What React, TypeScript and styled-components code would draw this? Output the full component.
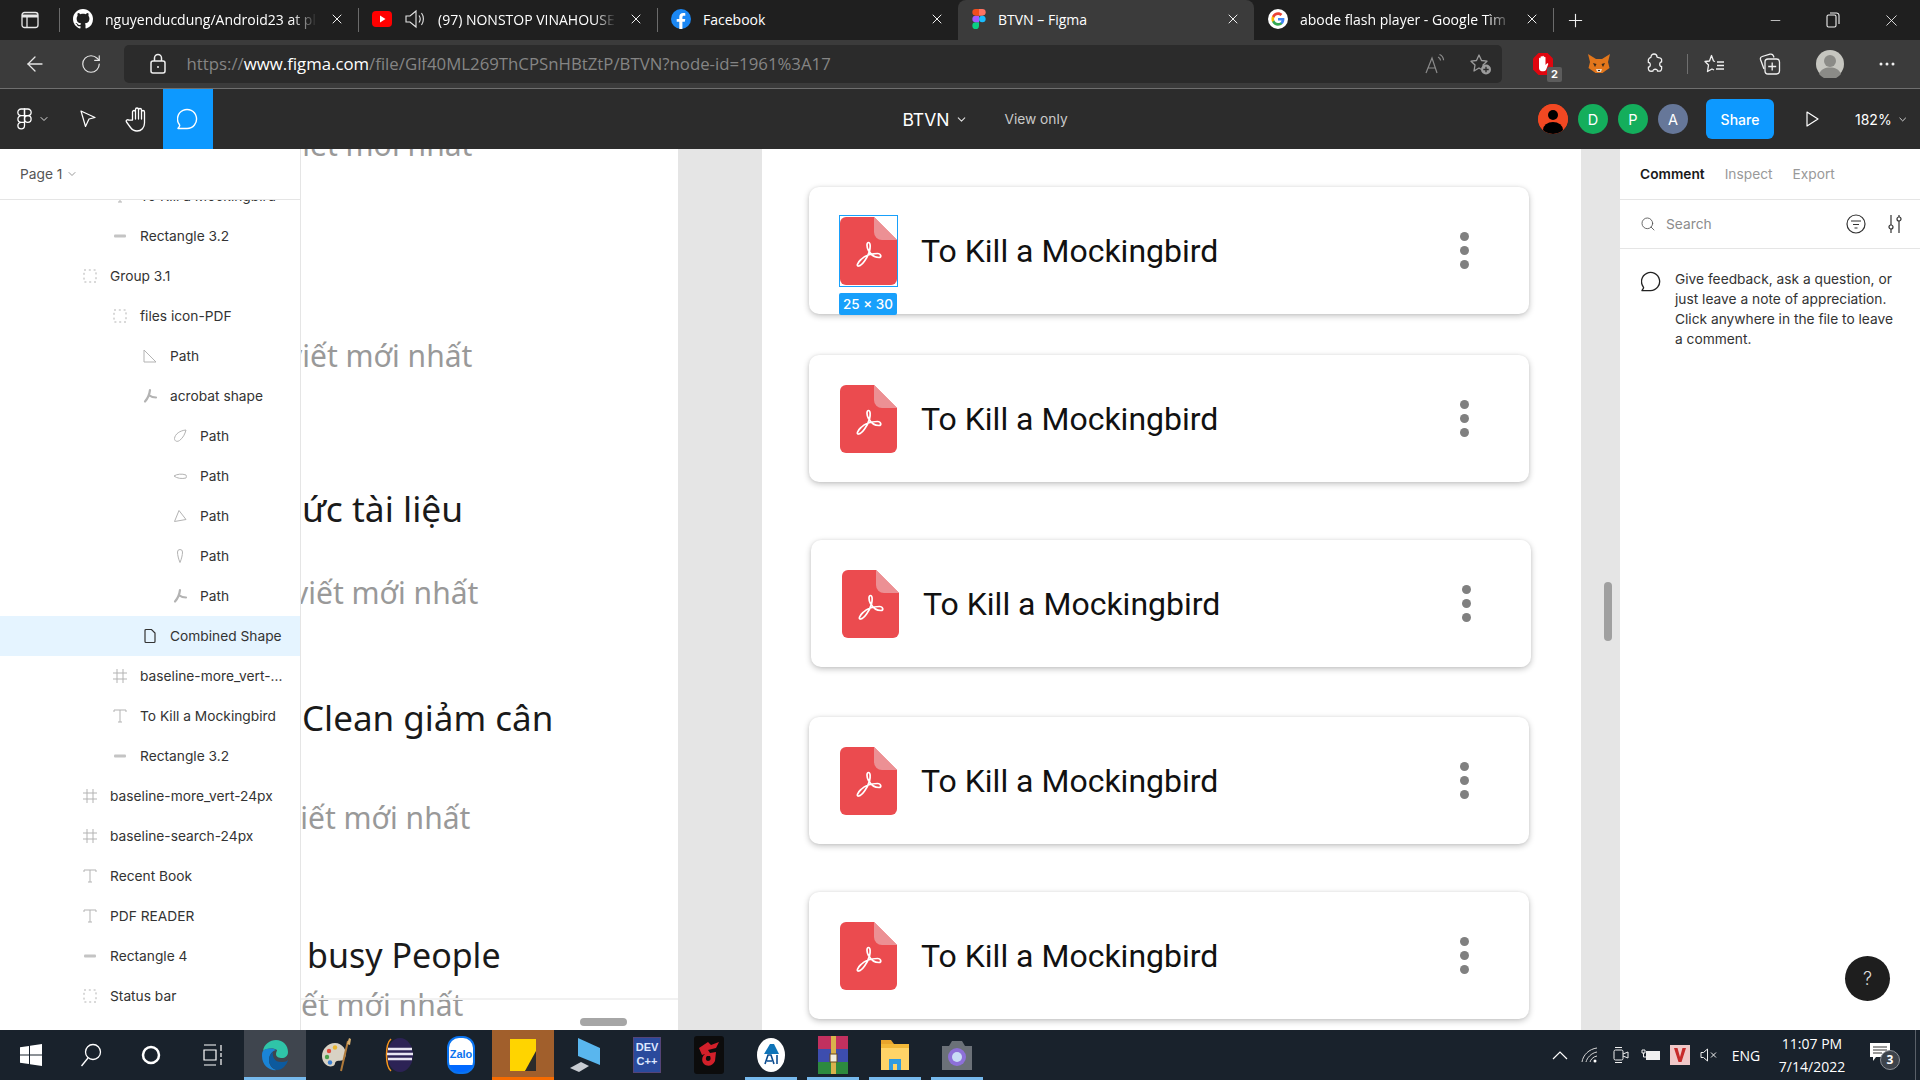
import React from "react";
import styled, { createGlobalStyle } from "styled-components";
import { ArrowLeft, ChevronDown, Minus, Plus, RotateCw, Search, X } from "lucide-react";

const GlobalStyle = createGlobalStyle`
  html, body {
    margin: 0;
    padding: 0;
    overflow: hidden;
    background: #fff;
  }
  * {
    box-sizing: border-box;
  }
`;

const Page = styled.div`
  width: 1920px;
  height: 1080px;
  display: flex;
  flex-direction: column;
  overflow: hidden;
  font-family: Inter, "Liberation Sans", sans-serif;
`;

/* browser chrome */
const TabStrip = styled.div`
  height: 40px;
  display: flex;
  align-items: center;
  background: #1f1f1f;
  color: #fff;
  font-family: "Open Sans", "Liberation Sans", sans-serif;
  font-size: 14px;
`;

const SideToggle = styled.div`
  width: 59px;
  height: 100%;
  display: flex;
  align-items: center;
  justify-content: center;
`;

const Tab = styled.div<{ $active?: boolean; $noSep?: boolean; $width: number }>`
  width: ${(p) => p.$width}px;
  height: 100%;
  display: flex;
  align-items: center;
  padding: 0 13px 2px 14px;
  gap: 12px;
  position: relative;
  background: ${(p) => (p.$active ? "#3b3b3b" : "transparent")};
  border-radius: ${(p) => (p.$active ? "8px 8px 0 0" : "0")};
  &::before {
    content: "";
    display: ${(p) => (p.$noSep ? "none" : "block")};
    position: absolute;
    left: 0;
    top: 8px;
    bottom: 8px;
    width: 1px;
    background: #6b6b6b;
  }
`;

const TabTitle = styled.span<{ $fade?: boolean }>`
  flex: 1;
  min-width: 0;
  white-space: nowrap;
  -webkit-mask-image: ${(p) => (p.$fade ? "linear-gradient(to right, #000 88%, transparent 100%)" : "none")};
  mask-image: ${(p) => (p.$fade ? "linear-gradient(to right, #000 88%, transparent 100%)" : "none")};
  font-size: 14px;
`;

const TabPlus = styled.div`
  width: 44px;
  height: 100%;
  display: flex;
  align-items: center;
  justify-content: center;
  position: relative;
  &::before {
    content: "";
    position: absolute;
    left: 0;
    top: 8px;
    bottom: 8px;
    width: 1px;
    background: #6b6b6b;
  }
`;

const WindowButtons = styled.div`
  margin-left: auto;
  display: flex;
  align-items: center;
`;

const WindowButton = styled.div`
  width: 58px;
  height: 40px;
  display: flex;
  align-items: center;
  justify-content: center;
`;

const BrowserBar = styled.div`
  height: 49px;
  display: flex;
  align-items: center;
  background: #3b3b3b;
  border-bottom: 1px solid #6f6f6f;
  padding-bottom: 1px;
`;

const NavButton = styled.div`
  width: 45px;
  display: flex;
  justify-content: center;
  align-items: center;
  color: #e6e6e6;
`;

const NavGroup = styled.div`
  display: flex;
  width: 125px;
  padding-left: 12px;
  gap: 11px;
`;

const AddressBar = styled.div`
  width: 1384px;
  height: 38px;
  background: #2b2b2b;
  border-radius: 5px;
  display: flex;
  align-items: center;
  padding: 0 0 0 26px;
  gap: 20px;
  font-family: "Open Sans", "Liberation Sans", sans-serif;
  font-size: 16.8px;
  color: #858585;
  white-space: nowrap;
`;

const UrlHost = styled.span`
  color: #fff;
`;

const AddressEnd = styled.div`
  margin-left: auto;
  display: flex;
  align-items: center;
  gap: 24px;
  padding-right: 10px;
`;

const Extensions = styled.div`
  flex: 1;
  display: flex;
  align-items: center;
  padding-left: 27px;
`;

const ExtButton = styled.div<{ $width: number }>`
  width: ${(p) => p.$width}px;
  display: flex;
  justify-content: center;
  align-items: center;
  position: relative;
`;

const ExtBadge = styled.span`
  position: absolute;
  right: -5px;
  bottom: -6px;
  width: 15px;
  height: 15px;
  background: #5c5c5c;
  border-radius: 2px;
  color: #fff;
  font: 700 11px/15px Inter, sans-serif;
  text-align: center;
`;

const ExtDivider = styled.div`
  width: 1px;
  height: 20px;
  background: #6f6f6f;
  margin: 0 8px 0 0;
`;

/* figma toolbar */
const FigmaBar = styled.div`
  height: 60px;
  background: #2c2c2c;
  display: grid;
  grid-template-columns: 1fr auto 1fr;
  align-items: center;
  color: #fff;
`;

const ToolGroup = styled.div`
  display: flex;
  align-items: stretch;
  height: 60px;
`;

const ToolButton = styled.div<{ $width: number; $active?: boolean }>`
  width: ${(p) => p.$width}px;
  display: flex;
  align-items: center;
  justify-content: center;
  background: ${(p) => (p.$active ? "#0d99ff" : "transparent")};
  gap: 6px;
`;

const FileTitle = styled.div`
  display: flex;
  align-items: center;
  font-size: 17.5px;
  font-weight: 400;
  margin-left: 50px;
`;

const TitleCaret = styled.span`
  display: flex;
  margin-left: 6px;
`;

const ViewOnly = styled.span`
  color: #c9c9c9;
  font-size: 13.75px;
  font-weight: 400;
  margin-left: 36px;
`;

const FigmaRight = styled.div`
  display: flex;
  align-items: center;
  justify-content: flex-end;
`;

const Avatar = styled.div<{ $bg: string }>`
  width: 30px;
  height: 30px;
  border-radius: 50%;
  margin-right: 10px;
  background: ${(p) => p.$bg};
  color: #fff;
  font-size: 14.5px;
  display: flex;
  align-items: center;
  justify-content: center;
  overflow: hidden;
`;

const ShareButton = styled.div`
  width: 68px;
  height: 40px;
  margin-left: 8px;
  background: #0d99ff;
  border-radius: 6px;
  display: flex;
  align-items: center;
  justify-content: center;
  font-size: 14px;
  font-weight: 500;
`;

const PlayWrap = styled.div`
  width: 64px;
  display: flex;
  justify-content: center;
  padding-left: 12px;
  margin-right: 17px;
`;

const Zoom = styled.div`
  display: flex;
  align-items: center;
  gap: 5px;
  font-size: 14px;
  padding-right: 12px;
  width: 65px;
`;

/* main area */
const Workspace = styled.div`
  height: 881px;
  display: flex;
  background: #fff;
`;

const LayersPanel = styled.div`
  width: 301px;
  flex: none;
  border-right: 1px solid #e5e5e5;
  display: flex;
  flex-direction: column;
  overflow: hidden;
`;

const PageHeader = styled.div`
  height: 51px;
  flex: none;
  border-bottom: 1px solid #e5e5e5;
  display: flex;
  align-items: center;
  gap: 4px;
  padding: 0 0 0 20px;
  font-size: 13.75px;
  color: #555;
  position: relative;
  z-index: 1;
  background: #fff;
`;

const LayerList = styled.div`
  margin-top: -24px;
`;

const LayerRow = styled.div<{ $level: number; $selected?: boolean }>`
  height: 40px;
  display: flex;
  align-items: center;
  gap: 12px;
  padding-left: ${(p) => 52 + p.$level * 30}px;
  background: ${(p) => (p.$selected ? "#e5f4ff" : "transparent")};
  font-size: 13.75px;
  color: #333;
  white-space: nowrap;
`;

const LayerGlyph = styled.svg`
  width: 16px;
  height: 16px;
  flex: none;
  overflow: visible;
`;

const TextFrame = styled.div`
  width: 377px;
  flex: none;
  position: relative;
  overflow: hidden;
  background: #fff;
  font-family: "Noto Sans", sans-serif;
  white-space: nowrap;
`;

const ArticleLine = styled.div<{ $top: number; $shift: number; $size: number; $title?: boolean }>`
  height: 40px;
  line-height: 40px;
  margin-top: ${(p) => p.$top}px;
  margin-left: ${(p) => p.$shift}px;
  font-size: ${(p) => p.$size}px;
  color: ${(p) => (p.$title ? "#1a1a1a" : "#999")};
`;

const FrameRule = styled.div`
  position: absolute;
  left: 0;
  right: 0;
  top: 849px;
  height: 2px;
  background: #f1f1f1;
`;

const HorizontalThumb = styled.div`
  position: absolute;
  left: 279px;
  top: 869px;
  width: 47px;
  height: 8px;
  border-radius: 4px;
  background: #a6a6a6;
`;

const GrayGutter = styled.div<{ $width: number }>`
  width: ${(p) => p.$width}px;
  flex: none;
  background: #e5e5e5;
  position: relative;
`;

const VerticalThumb = styled.div`
  position: absolute;
  left: 23px;
  top: 433px;
  width: 8px;
  height: 59px;
  border-radius: 4px;
  background: #a0a0a0;
`;

const CardFrame = styled.div`
  width: 819px;
  flex: none;
  background: #fff;
  overflow: hidden;
  display: flex;
  flex-direction: column;
  padding-left: 47px;
`;

const Card = styled.div<{ $top: number; $nudge?: number }>`
  width: 720px;
  height: 127px;
  flex: none;
  margin-top: ${(p) => p.$top}px;
  margin-left: ${(p) => p.$nudge ?? 0}px;
  background: #fff;
  border-radius: 10px;
  box-shadow: 0 2px 6px rgba(0, 0, 0, 0.24), 0 0 3px rgba(0, 0, 0, 0.06);
  display: flex;
  align-items: center;
  padding: 0 60px 0 31px;
  position: relative;
`;

const PdfWrap = styled.div`
  width: 57px;
  height: 68px;
  flex: none;
  position: relative;
`;

const PdfOutline = styled.div`
  position: absolute;
  inset: -2px -1px;
  border: 1.5px solid #18a0fb;
`;

const SizeBadge = styled.div`
  position: absolute;
  left: -1px;
  top: 76px;
  width: 58px;
  height: 22px;
  border-radius: 2px;
  background: #18a0fb;
  color: #fff;
  font-size: 13.5px;
  line-height: 22px;
  font-weight: 500;
  text-align: center;
  white-space: nowrap;
`;

const CardTitle = styled.div`
  margin-left: 24px;
  font-family: Roboto, sans-serif;
  font-size: 32px;
  color: #111;
  white-space: nowrap;
`;

const MoreDots = styled.div`
  margin-left: auto;
  display: flex;
  flex-direction: column;
  gap: 5px;
`;

const Dot = styled.span`
  width: 9px;
  height: 9px;
  border-radius: 50%;
  background: #808080;
`;

const RightPanel = styled.div`
  flex: 1;
  background: #fff;
  position: relative;
  display: flex;
  flex-direction: column;
  font-size: 13.75px;
`;

const PanelTabs = styled.div`
  height: 51px;
  border-bottom: 1px solid #e5e5e5;
  display: flex;
  align-items: center;
  gap: 20px;
  padding: 0 0 0 20px;
  color: #999;
`;

const PanelTabLabel = styled.span<{ $active?: boolean }>`
  color: ${(p) => (p.$active ? "#1a1a1a" : "#999")};
  font-weight: ${(p) => (p.$active ? 600 : 400)};
`;

const SearchRow = styled.div`
  height: 49px;
  border-bottom: 1px solid #e5e5e5;
  display: flex;
  align-items: center;
  padding: 0 17px 0 20px;
  color: #8c8c8c;
  gap: 10px;
`;

const SearchActions = styled.div`
  margin-left: auto;
  display: flex;
  align-items: center;
  gap: 21px;
`;

const CommentHint = styled.div`
  display: flex;
  gap: 13px;
  padding: 20px 20px 0 21px;
  color: #333;
  line-height: 20px;
`;

const HintIcon = styled.div`
  flex: none;
  padding-top: 2px;
`;

const HelpButton = styled.div`
  position: absolute;
  right: 30px;
  bottom: 29px;
  width: 45px;
  height: 45px;
  border-radius: 50%;
  background: #1e1e1e;
  color: #ddd;
  font-size: 18px;
  font-weight: 300;
  display: flex;
  align-items: center;
  justify-content: center;
`;

/* windows taskbar */
const Taskbar = styled.div`
  height: 50px;
  background: #19222c;
  display: flex;
  align-items: stretch;
  color: #fff;
  font-family: "Open Sans", "Liberation Sans", sans-serif;
`;

const StartArea = styled.div`
  display: flex;
`;

const TaskItem = styled.div<{ $width: number; $bg?: string; $bar?: string; $fullBar?: boolean }>`
  width: ${(p) => p.$width}px;
  height: 50px;
  display: flex;
  align-items: center;
  justify-content: center;
  background: ${(p) => p.$bg ?? "transparent"};
  position: relative;
  &::after {
    content: "";
    display: ${(p) => (p.$bar ? "block" : "none")};
    position: absolute;
    left: ${(p) => (p.$fullBar ? 0 : 5)}px;
    right: ${(p) => (p.$fullBar ? 0 : 5)}px;
    bottom: 0;
    height: 3px;
    background: ${(p) => p.$bar};
  }
`;

const Tray = styled.div`
  margin-left: auto;
  display: flex;
  align-items: center;
  padding-right: 10px;
  border-right: 1px solid #5a6068;
  margin-right: 4px;
  height: 100%;
`;

const TrayIcon = styled.div<{ $width: number }>`
  width: ${(p) => p.$width}px;
  display: flex;
  justify-content: center;
`;

const TrayLang = styled.div`
  width: 46px;
  text-align: center;
  font-size: 14px;
`;

const Clock = styled.div`
  width: 86px;
  text-align: center;
  font-size: 14px;
  line-height: 23px;
`;

const NotifyWrap = styled.div`
  width: 50px;
  height: 30px;
  display: flex;
  justify-content: center;
  position: relative;
`;

const NotifyCount = styled.span`
  position: absolute;
  left: 25px;
  top: 10px;
  width: 20px;
  height: 20px;
  border-radius: 50%;
  background: #3d434b;
  border: 1px solid #8c9096;
  color: #fff;
  font-size: 12px;
  font-weight: 700;
  line-height: 18px;
  text-align: center;
`;

const NotifyGlyph = styled.svg`
  margin-top: 3px;
`;

const ZaloMark = styled.div`
  width: 28px;
  height: 38px;
  border-radius: 12px;
  background: linear-gradient(#fff 78%, #0068ff 78%);
  border: 2px solid #0a73ef;
  color: #0a73ef;
  font: 700 11px/32px "Liberation Sans", sans-serif;
  text-align: center;
`;

const DevMark = styled.div`
  width: 28px;
  height: 36px;
  background: #2a4a9c;
  border: 1px solid #547;
  color: #dfe8ff;
  font: 700 11px/14px "Liberation Sans", sans-serif;
  text-align: center;
  padding-top: 2px;
`;

/* drawings */
const SidebarIcon = () => (
  <svg width="18" height="18" viewBox="0 0 18 18" fill="none" stroke="#e8e8e8" strokeWidth="1.3">
    <rect x="1" y="1.5" width="16" height="15" rx="2.5" />
    <path d="M1 5h16" strokeWidth="3" />
    <path d="M6 5v11" />
  </svg>
);

const GithubIcon = () => (
  <svg width="20" height="20" viewBox="0 0 16 16" fill="#fff">
    <path d="M8 0C3.58 0 0 3.58 0 8c0 3.54 2.29 6.53 5.47 7.59.4.07.55-.17.55-.38 0-.19-.01-.82-.01-1.49-2.01.37-2.53-.49-2.69-.94-.09-.23-.48-.94-.82-1.13-.28-.15-.68-.52-.01-.53.63-.01 1.08.58 1.23.82.72 1.21 1.87.87 2.33.66.07-.52.28-.87.51-1.07-1.78-.2-3.64-.89-3.64-3.95 0-.87.31-1.59.82-2.15-.08-.2-.36-1.02.08-2.12 0 0 .67-.21 2.2.82.64-.18 1.32-.27 2-.27s1.36.09 2 .27c1.53-1.04 2.2-.82 2.2-.82.44 1.1.16 1.92.08 2.12.51.56.82 1.27.82 2.15 0 3.07-1.87 3.75-3.65 3.95.29.25.54.73.54 1.48 0 1.07-.01 1.93-.01 2.2 0 .21.15.46.55.38A8.01 8.01 0 0 0 16 8c0-4.42-3.58-8-8-8z" />
  </svg>
);

const YoutubeIcon = () => (
  <svg width="20" height="20" viewBox="0 0 20 20">
    <rect y="2" width="20" height="16" rx="4" fill="#f00" />
    <path d="M8 6.5 13.5 10 8 13.5z" fill="#fff" />
  </svg>
);

const SpeakerIcon = () => (
  <svg width="22" height="22" viewBox="0 0 22 22" fill="none" stroke="#e6e6e6" strokeWidth="1.1">
    <path d="M2 8h4l6-5v16l-6-5H2z" />
    <path d="M15 7.5c1.4 2 1.4 5 0 7M17.5 5c2.5 3.4 2.5 8.6 0 12" />
  </svg>
);

const FacebookIcon = () => (
  <svg width="20" height="20" viewBox="0 0 20 20">
    <circle cx="10" cy="10" r="10" fill="#1b87f3" />
    <path d="M13.8 12.8l.5-2.8h-2.9V8.2c0-.8.4-1.5 1.6-1.5h1.3V4.2s-1.2-.2-2.2-.2c-2.3 0-3.8 1.4-3.8 3.9V10H5.7v2.8h2.6V20h3.1v-7.2z" fill="#fff" />
  </svg>
);

const FigmaColorIcon = () => (
  <svg width="14" height="20" viewBox="0 0 14 21">
    <path d="M3.5 21A3.5 3.5 0 0 0 7 17.5V14H3.5a3.5 3.5 0 0 0 0 7z" fill="#0acf83" />
    <path d="M0 10.5A3.5 3.5 0 0 1 3.5 7H7v7H3.5A3.5 3.5 0 0 1 0 10.5z" fill="#a259ff" />
    <path d="M0 3.5A3.5 3.5 0 0 1 3.5 0H7v7H3.5A3.5 3.5 0 0 1 0 3.5z" fill="#f24e1e" />
    <path d="M7 0h3.5a3.5 3.5 0 0 1 0 7H7z" fill="#ff7262" />
    <circle cx="10.5" cy="10.5" r="3.5" fill="#1abcfe" />
  </svg>
);

const GoogleIcon = () => (
  <svg width="20" height="20" viewBox="0 0 20 20">
    <circle cx="10" cy="10" r="10" fill="#fff" />
    <path d="M16.4 10.2c0-.5 0-.9-.1-1.3H10v2.5h3.6c-.2.8-.6 1.5-1.3 2v1.7h2.1c1.3-1.2 2-2.9 2-4.9z" fill="#4285f4" />
    <path d="M10 16.7c1.8 0 3.3-.6 4.4-1.6l-2.1-1.7c-.6.4-1.4.6-2.3.6-1.7 0-3.2-1.2-3.7-2.8H4.1v1.7c1.1 2.2 3.4 3.8 5.9 3.8z" fill="#34a853" />
    <path d="M6.3 11.2c-.3-.8-.3-1.6 0-2.4V7.1H4.1c-.9 1.8-.9 4 0 5.8z" fill="#fbbc05" />
    <path d="M10 5.9c1 0 1.8.3 2.5 1l1.9-1.9C13.2 3.9 11.7 3.3 10 3.3c-2.5 0-4.8 1.5-5.9 3.8l2.2 1.7c.5-1.7 2-2.9 3.7-2.9z" fill="#ea4335" />
  </svg>
);

const LockIcon = () => (
  <svg width="16" height="21" viewBox="0 0 16 21" fill="none" stroke="#f0f0f0" strokeWidth="1.5">
    <rect x="1" y="8" width="14" height="12" rx="2" />
    <path d="M4.5 8V5a3.5 3.5 0 0 1 7 0v3" />
    <circle cx="8" cy="14" r="1" fill="#f0f0f0" stroke="none" />
  </svg>
);

const ReadAloudIcon = () => (
  <svg width="22" height="20" viewBox="0 0 22 20" fill="none" stroke="#8b8b8b" strokeWidth="1.2">
    <path d="M2 19 8 4l5 15M4 14h7" />
    <path d="M14 3c1.5.6 2.4 2 2.6 3.5M15.5.5c2.4 1 3.9 3.2 4.1 5.8" />
  </svg>
);

const StarAddIcon = () => (
  <svg width="22" height="22" viewBox="0 0 22 22" fill="none" stroke="#9c9c9c" strokeWidth="1.3" strokeLinejoin="round">
    <path d="M9 2l2.500 5.500 5.500.7-4 3.800 1 6-5-3-5 3 1-6-4-3.800 5.500-.7z" />
    <circle cx="16" cy="16.5" r="5" fill="#9c9c9c" stroke="none" />
    <path d="M16 13.800v5.400M13.300 16.500h5.400" stroke="#2b2b2b" />
  </svg>
);

const AdblockIcon = () => (
  <svg width="22" height="24" viewBox="0 0 22 24">
    <path d="M6.5 1h9L21 6.500v11L15.500 23h-9L1 17.500v-11z" fill="#e0060f" />
    <path d="M7 11V6.500c0-1 1.500-1 1.500 0V5c0-1 1.700-1 1.700 0v-.5c0-1 1.700-1 1.700 0V5.500c0-1 1.600-1 1.600 0V13l1.400-1.500c.8-.7 1.800.2 1.200 1L14 18c-.6.8-1.500 1.200-2.500 1.200H10C8.200 19.200 7 18 7 16z" fill="#fff" />
  </svg>
);

const FoxIcon = () => (
  <svg width="22" height="22" viewBox="0 0 22 22">
    <path d="M0 1l8 5h6l8-5-2 8 1.500 6-5 3.500-2 1.500h-7l-2-1.500-5-3.500L2 9z" fill="#e2761b" />
    <path d="M5 10l3.500 1L7 14zM17 10l-3.500 1L15 14z" fill="#3a2a1a" />
    <path d="M8 16h6l-1 3h-4z" fill="#e8d3c0" />
    <path d="M10 17h2v1h-2z" fill="#222" />
  </svg>
);

const PuzzleIcon = () => (
  <svg width="20" height="21" viewBox="0 0 20 21" fill="none" stroke="#f0f0f0" strokeWidth="1.3" strokeLinejoin="round">
    <path d="M7 4c0-4 6-4 6 0 0 .6 3 .6 4 1.500s.6 3.500.6 3.500c-2.500-.5-2.500 5 0 4.500 0 0 .4 3-.6 4s-3.500.6-3.500.6c.5-2.500-5-2.500-4.500 0 0 0-3 .5-4-.6-1-1-.6-3.500-.6-3.500 2.500.5 2.500-5 0-4.500 0 0-.5-3 .6-4S7 4.600 7 4z" />
  </svg>
);

const StarListIcon = () => (
  <svg width="22" height="20" viewBox="0 0 22 20" fill="none" stroke="#f0f0f0" strokeWidth="1.3" strokeLinejoin="round">
    <path d="M11 7.500 9.500 7l-2-5.500-2 5.500L1 7.500 4.500 11l-1 6.500L8 15l2 1" />
    <path d="M13 8h7M13 11.500h7M12 15h8" />
  </svg>
);

const CollectionsIcon = () => (
  <svg width="22" height="22" viewBox="0 0 22 22" fill="none" stroke="#f0f0f0" strokeWidth="1.3">
    <path d="M5 16 1.500 6.500a2.500 2.500 0 0 1 1.700-3L11 1.200c1.500-.4 3 .4 3.500 1.800l.5 1.500" />
    <rect x="6" y="6" width="14.5" height="15" rx="3" />
    <path d="M13.200 9.500v8M9.200 13.500h8" />
  </svg>
);

const ProfileIcon = () => (
  <svg width="28" height="28" viewBox="0 0 28 28">
    <circle cx="14" cy="14" r="14" fill="#c6c6c0" />
    <circle cx="14" cy="11" r="6" fill="#8b8b87" />
    <path d="M3 24c2-5 6-6.500 11-6.500S23 19 25 24a14 14 0 0 1-22 0z" fill="#8b8b87" />
  </svg>
);

const FigmaMark = () => (
  <svg width="15" height="22" viewBox="0 0 15 22" fill="none" stroke="#fff" strokeWidth="1.3">
    <path d="M7.500 1H4.200a3.200 3.200 0 0 0 0 6.700h3.300zM7.500 7.700H4.200a3.200 3.200 0 0 0 0 6.600h3.300zM7.500 14.300H4.200a3.300 3.300 0 1 0 3.300 3.300z" />
    <path d="M7.500 1h3.300a3.300 3.300 0 0 1 0 6.700H7.500z" />
    <circle cx="10.8" cy="11" r="3.3" />
  </svg>
);

const MoveIcon = () => (
  <svg width="16" height="18" viewBox="0 0 16 18" fill="none" stroke="#fff" strokeWidth="1.2" strokeLinejoin="round">
    <path d="M1 1l14 6.500-6 1.500-3.500 7.500z" />
  </svg>
);

const HandIcon = () => (
  <svg width="24" height="26" viewBox="0 0 24 26" fill="none" stroke="#fff" strokeWidth="1.3" strokeLinejoin="round" strokeLinecap="round">
    <path d="M7.500 14V6a1.500 1.500 0 0 1 3 0V3.500a1.500 1.500 0 0 1 3 0V4a1.500 1.500 0 0 1 3 0v2a1.500 1.500 0 0 1 3 0V17c0 4.500-3 8-7.500 8-3.500 0-5-1.500-6.500-3.500L1.500 16c-1-1.500 1-3 2.500-1.800z" />
    <path d="M10.500 6v7M13.500 4v9M16.500 6v7" />
  </svg>
);

const CommentIcon = ({ size = 22, color = "#fff" }: { size?: number; color?: string }) => (
  <svg width={size} height={size} viewBox="0 0 22 22" fill="none" stroke={color} strokeWidth="1.4" strokeLinejoin="round">
    <path d="M1 20.500h9a9.500 9.500 0 1 0-7.500-3.700c.3.500.2 1-.1 1.500z" />
  </svg>
);

const PlayIcon = () => (
  <svg width="13" height="16" viewBox="0 0 13 16" fill="none" stroke="#fff" strokeWidth="1.2" strokeLinejoin="round">
    <path d="M1 1l11 7-11 7z" />
  </svg>
);

const PersonAvatar = () => (
  <svg width="30" height="30" viewBox="0 0 30 30">
    <circle cx="15" cy="15" r="15" fill="#f24822" />
    <circle cx="15" cy="11" r="5" fill="#000" />
    <ellipse cx="15" cy="26" rx="10" ry="8" fill="#000" />
  </svg>
);

const PdfIcon = () => (
  <svg width="57" height="68" viewBox="0 0 57 68">
    <path d="M34 0H6a6 6 0 0 0-6 6v56a6 6 0 0 0 6 6h45a6 6 0 0 0 6-6V23z" fill="#eb4b4f" />
    <path d="M34 0l23 23H42a8 8 0 0 1-8-8z" fill="#ec9094" />
    <path
      d="M28.500 25.500C26.500 25.500 26.500 30 28.500 33.500C31 38 35 40.500 39 40.500C42 40.500 41 36.500 37.500 36.500C32 36.500 25 38.500 21 42.500C17 46 16.500 49.500 18.500 49C22 48.500 27.500 41 29.500 34C30.500 30 30.500 25.500 28.500 25.500Z"
      fill="none"
      stroke="#fff"
      strokeWidth="1.7"
    />
  </svg>
);

type LayerKind = "group" | "frame" | "text" | "rect" | "corner" | "acrobat" | "leaf" | "lens" | "tri" | "drop" | "shape";

const LayerIcon = ({ kind }: { kind: LayerKind }) => {
  const line = { fill: "none", stroke: "#b3b3b3", strokeWidth: 1 };
  switch (kind) {
    case "group":
      return (
        <LayerGlyph viewBox="0 0 16 16">
          <path d="M2 2h12v12H2z" {...line} strokeDasharray="2 2.8" />
        </LayerGlyph>
      );
    case "frame":
      return (
        <LayerGlyph viewBox="0 0 16 16">
          <path d="M5 1v14M11 1v14M1 5h14M1 11h14" {...line} />
        </LayerGlyph>
      );
    case "text":
      return (
        <LayerGlyph viewBox="0 0 16 16">
          <path d="M2 4V2h12v2M8 2v12M6 14h4" {...line} />
        </LayerGlyph>
      );
    case "rect":
      return (
        <LayerGlyph viewBox="0 0 16 16">
          <rect x="2" y="6.5" width="12" height="3" rx="1" fill="#c4c4c4" />
        </LayerGlyph>
      );
    case "corner":
      return (
        <LayerGlyph viewBox="0 0 16 16">
          <path d="M2 2l12 12H2z" {...line} />
        </LayerGlyph>
      );
    case "acrobat":
      return (
        <LayerGlyph viewBox="0 0 16 16">
          <path d="M8 2C7.500 6 7 9 3 13.500M7.500 7.500C10 9.500 12 9.500 14 9.500" fill="none" stroke="#b3b3b3" strokeWidth="2.2" strokeLinecap="round" />
        </LayerGlyph>
      );
    case "leaf":
      return (
        <LayerGlyph viewBox="0 0 16 16">
          <path d="M14 2C8 2.500 3 6 2.500 10.500c0 3 3 3.500 5 2C11 10 13 6 14 2z" {...line} />
        </LayerGlyph>
      );
    case "lens":
      return (
        <LayerGlyph viewBox="0 0 16 16">
          <path d="M2 8c3-2 8-2.500 12-1 .5 1 .5 2 0 3-4 1-9 .5-12-2z" {...line} />
        </LayerGlyph>
      );
    case "tri":
      return (
        <LayerGlyph viewBox="0 0 16 16">
          <path d="M7 2.500l7 9-11.500 2z" {...line} />
        </LayerGlyph>
      );
    case "drop":
      return (
        <LayerGlyph viewBox="0 0 16 16">
          <path d="M8 14.500C6.500 11 5.500 7 5.500 4a2.500 2.500 0 0 1 5 0c0 3-1 7-2.500 10.500z" {...line} />
        </LayerGlyph>
      );
    default:
      return (
        <LayerGlyph viewBox="0 0 16 16">
          <path d="M3 2.500a1 1 0 0 1 1-1h5.500L13 5v8.500a1 1 0 0 1-1 1H4a1 1 0 0 1-1-1z" fill="none" stroke="#333" strokeWidth="1.2" />
        </LayerGlyph>
      );
  }
};

const layers: { name: string; level: number; kind: LayerKind; selected?: boolean }[] = [
  { name: "To Kill a Mockingbird", level: 2, kind: "text" },
  { name: "Rectangle 3.2", level: 2, kind: "rect" },
  { name: "Group 3.1", level: 1, kind: "group" },
  { name: "files icon-PDF", level: 2, kind: "group" },
  { name: "Path", level: 3, kind: "corner" },
  { name: "acrobat shape", level: 3, kind: "acrobat" },
  { name: "Path", level: 4, kind: "leaf" },
  { name: "Path", level: 4, kind: "lens" },
  { name: "Path", level: 4, kind: "tri" },
  { name: "Path", level: 4, kind: "drop" },
  { name: "Path", level: 4, kind: "acrobat" },
  { name: "Combined Shape", level: 3, kind: "shape", selected: true },
  { name: "baseline-more_vert-...", level: 2, kind: "frame" },
  { name: "To Kill a Mockingbird", level: 2, kind: "text" },
  { name: "Rectangle 3.2", level: 2, kind: "rect" },
  { name: "baseline-more_vert-24px", level: 1, kind: "frame" },
  { name: "baseline-search-24px", level: 1, kind: "frame" },
  { name: "Recent Book", level: 1, kind: "text" },
  { name: "PDF READER", level: 1, kind: "text" },
  { name: "Rectangle 4", level: 1, kind: "rect" },
  { name: "Status bar", level: 1, kind: "group" },
];

const articleLines = [
  { text: "viết mới nhất", top: -24, shift: -14, size: 30 },
  { text: "viết mới nhất", top: 171, shift: -14, size: 30 },
  { text: "ức tài liệu", top: 112, shift: 1, size: 35.4, title: true },
  { text: "viết mới nhất", top: 45, shift: -8, size: 30 },
  { text: "Clean giảm cân", top: 85, shift: 1, size: 35, title: true },
  { text: "viết mới nhất", top: 60, shift: -16, size: 30 },
  { text: "busy People", top: 97, shift: 6, size: 34, title: true },
  { text: "viết mới nhất", top: 10, shift: -23, size: 30 },
];

const cards = [{ top: 38, selected: true }, { top: 41 }, { top: 58, nudge: 2 }, { top: 50 }, { top: 48 }];

const TaskGlyphs = {
  Windows: () => (
    <svg width="22" height="22" viewBox="0 0 22 22" fill="#fff">
      <path d="M0 3.200 9 2v8.500H0zM10 1.800 22 0v10.500H10zM0 11.500h9V20L0 18.800zM10 11.500h12V22l-12-1.800z" />
    </svg>
  ),
  Search: () => (
    <svg width="22" height="24" viewBox="0 0 22 24" fill="none" stroke="#fff" strokeWidth="1.3">
      <circle cx="13" cy="9" r="7.5" />
      <path d="M8 15 1.500 23" />
    </svg>
  ),
  Cortana: () => (
    <svg width="20" height="20" viewBox="0 0 20 20" fill="none" stroke="#fff" strokeWidth="2.5">
      <circle cx="10" cy="10" r="8" />
    </svg>
  ),
  TaskView: () => (
    <svg width="20" height="22" viewBox="0 0 20 22" fill="none" stroke="#fff" strokeWidth="1.2">
      <path d="M1 1h12M1 21h12M1 6h12v10H1zM18 1v6M18 9v4M18 15v6" />
    </svg>
  ),
  Edge: () => (
    <svg width="30" height="32" viewBox="0 0 30 32">
      <path d="M3 12C4 5 10 1 16 1c7 0 12 5 12 12 0 4-3 6-6 6-3 0-6-1-6-4 0-2 1-3 1-4-5-3-12-1-14 1z" fill="#2fc4a8" />
      <path d="M3 12c3-3 9-3 13-1-4 1-7 5-7 10 0 5 3 9 8 10-7 1-15-4-15-14 0-2 0-4 1-5z" fill="#1a84d6" />
      <path d="M17 31c-4-1-8-5-8-10 0-3 1-6 4-8-1 5 2 11 10 10 2 0 4-1 5-2-1 5-6 10-11 10z" fill="#0c5a9e" />
    </svg>
  ),
  Paint: () => (
    <svg width="32" height="34" viewBox="0 0 32 34">
      <path d="M14 5C7 5 1 11 1 18s6 12 11 10c3-1 1-4 4-5s6 1 8-3C27 12 21 5 14 5z" fill="#d8d2c4" />
      <circle cx="8" cy="13" r="2.2" fill="#e04a3a" />
      <circle cx="14" cy="9.5" r="2.2" fill="#e8b42e" />
      <circle cx="6" cy="19" r="2.2" fill="#4aa04a" />
      <circle cx="9" cy="24.5" r="2.2" fill="#3a7ed0" />
      <path d="M20 33 27 3" stroke="#b07a3a" strokeWidth="2" />
      <path d="M26 6 28 0l2 1-1 6z" fill="#d8b070" />
    </svg>
  ),
  Eclipse: () => (
    <svg width="30" height="36" viewBox="0 0 30 36">
      <ellipse cx="16" cy="18" rx="13" ry="17" fill="#2c2255" />
      <path d="M7 2C1 7 1 29 7 34" fill="none" stroke="#f7941e" strokeWidth="1.5" />
      <path d="M4 12h24M3 17h26M4 22h24" stroke="#e8e6f2" strokeWidth="2.5" />
    </svg>
  ),
  Zalo: () => <ZaloMark>Zalo</ZaloMark>,
  Sticky: () => (
    <svg width="28" height="32" viewBox="0 0 28 32">
      <path d="M1 0h26v20L16 32H1z" fill="#ffd400" />
      <path d="M27 12v20H16z" fill="#2b2b2b" />
    </svg>
  ),
  Pc: () => (
    <svg width="32" height="36" viewBox="0 0 32 36">
      <path d="M9 1l22 10v17L9 19z" fill="#59b6ee" />
      <path d="M1 31l11-6 8 4-10 6z" fill="#c8ccd2" />
    </svg>
  ),
  Dev: () => (
    <DevMark>
      DEV
      <br />
      C++
    </DevMark>
  ),
  Garena: () => (
    <svg width="30" height="38" viewBox="0 0 30 38">
      <rect width="30" height="38" rx="3" fill="#0c0c0c" />
      <path d="M5 12 14 6l3 3 8-3-3 6-8 2 2 3 6-1-1 9c-2 5-8 6-11 3-3-3-2-8 1-10l-3 1zm8 8c-2 2-1 5 1 5 3 0 3-3 2-5z" fill="#d3202a" />
    </svg>
  ),
  Ai: () => (
    <svg width="30" height="34" viewBox="0 0 30 34">
      <ellipse cx="15" cy="17" rx="14" ry="17" fill="#fff" />
      <path d="M8 16 14 6h4l5 10z" fill="#0f74b8" />
      <path d="M9 26l3-9h3l3 9M11 23h5M21 17v9" fill="none" stroke="#0a4c90" strokeWidth="1.6" />
    </svg>
  ),
  Rar: () => (
    <svg width="30" height="38" viewBox="0 0 30 38">
      <rect y="0" width="30" height="13" fill="#c2305f" />
      <rect y="13" width="30" height="13" fill="#3d4dae" />
      <rect y="26" width="30" height="12" fill="#2d8a3e" />
      <rect x="13" width="5" height="38" fill="#d9b24c" />
      <rect x="12" y="18" width="7" height="8" fill="#f1efe2" stroke="#6a4a1e" />
    </svg>
  ),
  Explorer: () => (
    <svg width="30" height="34" viewBox="0 0 30 34">
      <path d="M1 2h10l3 4h-13z" fill="#e8a52c" />
      <path d="M1 6h28v26H1z" fill="#ffd467" />
      <rect x="1" y="6" width="28" height="4" fill="#f2b838" />
      <path d="M9 32V21h12v11h-4v-6h-4v6z" fill="#2f9be0" />
    </svg>
  ),
  Camera: () => (
    <svg width="32" height="32" viewBox="0 0 32 32">
      <path d="M1 7h7l3-5h10l3 5h7v24H1z" fill="#6b7178" />
      <circle cx="16" cy="18" r="9" fill="#8d70d8" />
      <circle cx="16" cy="18" r="5" fill="#c8dcf5" />
    </svg>
  ),
};

const taskItems: { Glyph: () => React.ReactElement; width: number; bg?: string; bar?: string; full?: boolean }[] = [
  { Glyph: TaskGlyphs.Windows, width: 61 },
  { Glyph: TaskGlyphs.Search, width: 60 },
  { Glyph: TaskGlyphs.Cortana, width: 60 },
  { Glyph: TaskGlyphs.TaskView, width: 63 },
  { Glyph: TaskGlyphs.Edge, width: 62, bg: "#3f454e", bar: "#76b9ed", full: true },
  { Glyph: TaskGlyphs.Paint, width: 62 },
  { Glyph: TaskGlyphs.Eclipse, width: 62 },
  { Glyph: TaskGlyphs.Zalo, width: 62 },
  { Glyph: TaskGlyphs.Sticky, width: 62, bg: "#a15f2c", bar: "#f76b00", full: true },
  { Glyph: TaskGlyphs.Pc, width: 62 },
  { Glyph: TaskGlyphs.Dev, width: 62 },
  { Glyph: TaskGlyphs.Garena, width: 62 },
  { Glyph: TaskGlyphs.Ai, width: 62, bar: "#76b9ed" },
  { Glyph: TaskGlyphs.Rar, width: 62, bar: "#76b9ed" },
  { Glyph: TaskGlyphs.Explorer, width: 62, bar: "#76b9ed" },
  { Glyph: TaskGlyphs.Camera, width: 62, bar: "#76b9ed" },
];

const CloseMark = () => <X size={16} color="#f0f0f0" strokeWidth={1.5} />;

export default function App() {
  return (
    <Page>
      <GlobalStyle />
      <TabStrip>
        <SideToggle>
          <SidebarIcon />
        </SideToggle>
        <Tab $width={299}>
          <GithubIcon />
          <TabTitle $fade>nguyenducdung/Android23 at pl</TabTitle>
          <CloseMark />
        </Tab>
        <Tab $width={299}>
          <YoutubeIcon />
          <SpeakerIcon />
          <TabTitle $fade>(97) NONSTOP VINAHOUSE</TabTitle>
          <CloseMark />
        </Tab>
        <Tab $width={301}>
          <FacebookIcon />
          <TabTitle>Facebook</TabTitle>
          <CloseMark />
        </Tab>
        <Tab $width={296} $active $noSep>
          <FigmaColorIcon />
          <TabTitle>BTVN – Figma</TabTitle>
          <CloseMark />
        </Tab>
        <Tab $width={299} $noSep>
          <GoogleIcon />
          <TabTitle $fade>abode flash player - Google Tìm</TabTitle>
          <CloseMark />
        </Tab>
        <TabPlus>
          <Plus size={21} color="#f0f0f0" strokeWidth={1.3} />
        </TabPlus>
        <WindowButtons>
          <WindowButton>
            <Minus size={15} color="#f0f0f0" strokeWidth={1.2} />
          </WindowButton>
          <WindowButton>
            <svg width="14" height="16" viewBox="0 0 14 16" fill="none" stroke="#f0f0f0" strokeWidth="1.1">
              <rect x="1" y="3" width="9" height="12" rx="1.5" />
              <path d="M4 1h6.500A2.500 2.500 0 0 1 13 3.500V12" />
            </svg>
          </WindowButton>
          <WindowButton>
            <X size={19} color="#f0f0f0" strokeWidth={1.1} />
          </WindowButton>
        </WindowButtons>
      </TabStrip>

      <BrowserBar>
        <NavGroup>
          <NavButton>
            <ArrowLeft size={24} strokeWidth={1.3} />
          </NavButton>
          <NavButton>
            <RotateCw size={22} strokeWidth={1.3} />
          </NavButton>
        </NavGroup>
        <AddressBar>
          <LockIcon />
          <span>
            https://<UrlHost>www.figma.com</UrlHost>/file/Glf40ML269ThCPSnHBtZtP/BTVN?node-id=1961%3A17
          </span>
          <AddressEnd>
            <ReadAloudIcon />
            <StarAddIcon />
          </AddressEnd>
        </AddressBar>
        <Extensions>
          <ExtButton $width={28}>
            <AdblockIcon />
            <ExtBadge>2</ExtBadge>
          </ExtButton>
          <ExtButton $width={84}>
            <FoxIcon />
          </ExtButton>
          <ExtButton $width={26}>
            <PuzzleIcon />
          </ExtButton>
          <ExtButton $width={20} />
          <ExtDivider />
          <ExtButton $width={38}>
            <StarListIcon />
          </ExtButton>
          <ExtButton $width={72}>
            <CollectionsIcon />
          </ExtButton>
          <ExtButton $width={48}>
            <ProfileIcon />
          </ExtButton>
          <ExtButton $width={66}>
            <svg width="16" height="4" viewBox="0 0 16 4" fill="#f0f0f0">
              <circle cx="2" cy="2" r="1.5" />
              <circle cx="8" cy="2" r="1.5" />
              <circle cx="14" cy="2" r="1.5" />
            </svg>
          </ExtButton>
        </Extensions>
      </BrowserBar>

      <FigmaBar>
        <ToolGroup>
          <ToolButton $width={66}>
            <FigmaMark />
            <ChevronDown size={12} color="#ddd" />
          </ToolButton>
          <ToolButton $width={44}>
            <MoveIcon />
          </ToolButton>
          <ToolButton $width={53}>
            <HandIcon />
          </ToolButton>
          <ToolButton $width={50} $active>
            <CommentIcon size={22} />
          </ToolButton>
        </ToolGroup>
        <FileTitle>
          BTVN
          <TitleCaret>
            <ChevronDown size={13} color="#ddd" />
          </TitleCaret>
          <ViewOnly>View only</ViewOnly>
        </FileTitle>
        <FigmaRight>
          <Avatar $bg="#f24822">
            <PersonAvatar />
          </Avatar>
          <Avatar $bg="#14ae5c">D</Avatar>
          <Avatar $bg="#14ae5c">P</Avatar>
          <Avatar $bg="#667799">A</Avatar>
          <ShareButton>Share</ShareButton>
          <PlayWrap>
            <PlayIcon />
          </PlayWrap>
          <Zoom>
            182%
            <ChevronDown size={13} color="#ddd" />
          </Zoom>
        </FigmaRight>
      </FigmaBar>

      <Workspace>
        <LayersPanel>
          <PageHeader>
            Page 1
            <ChevronDown size={12} color="#999" />
          </PageHeader>
          <LayerList>
            {layers.map((layer, i) => (
              <LayerRow key={i} $level={layer.level} $selected={layer.selected}>
                <LayerIcon kind={layer.kind} />
                {layer.name}
              </LayerRow>
            ))}
          </LayerList>
        </LayersPanel>

        <TextFrame>
          {articleLines.map((line, i) => (
            <ArticleLine key={i} $top={line.top} $shift={line.shift} $size={line.size} $title={line.title}>
              {line.text}
            </ArticleLine>
          ))}
          <FrameRule />
          <HorizontalThumb />
        </TextFrame>
        <GrayGutter $width={84} />

        <CardFrame>
          {cards.map((card, i) => (
            <Card key={i} $top={card.top} $nudge={card.nudge}>
              <PdfWrap>
                <PdfIcon />
                {card.selected && (
                  <>
                    <PdfOutline />
                    <SizeBadge>25 × 30</SizeBadge>
                  </>
                )}
              </PdfWrap>
              <CardTitle>To Kill a Mockingbird</CardTitle>
              <MoreDots>
                <Dot />
                <Dot />
                <Dot />
              </MoreDots>
            </Card>
          ))}
        </CardFrame>
        <GrayGutter $width={39}>
          <VerticalThumb />
        </GrayGutter>

        <RightPanel>
          <PanelTabs>
            <PanelTabLabel $active>Comment</PanelTabLabel>
            <PanelTabLabel>Inspect</PanelTabLabel>
            <PanelTabLabel>Export</PanelTabLabel>
          </PanelTabs>
          <SearchRow>
            <Search size={16} color="#555" strokeWidth={1.3} />
            Search
            <SearchActions>
              <svg width="20" height="20" viewBox="0 0 20 20" fill="none" stroke="#333" strokeWidth="1.2">
                <circle cx="10" cy="10" r="9" />
                <path d="M5 7h10M7 10.500h6M8.500 14h3" />
              </svg>
              <svg width="16" height="20" viewBox="0 0 16 20" fill="none" stroke="#333" strokeWidth="1.2">
                <path d="M4 1v10M4 15v4M12 1v2M12 7v12" />
                <circle cx="4" cy="13" r="2" />
                <circle cx="12" cy="5" r="2" />
              </svg>
            </SearchActions>
          </SearchRow>
          <CommentHint>
            <HintIcon>
              <CommentIcon size={21} color="#222" />
            </HintIcon>
            <div>
              Give feedback, ask a question, or just leave a note of appreciation. Click anywhere in the file to leave a comment.
            </div>
          </CommentHint>
          <HelpButton>?</HelpButton>
        </RightPanel>
      </Workspace>

      <Taskbar>
        <StartArea>
          {taskItems.map(({ Glyph, width, bg, bar, full }, i) => (
            <TaskItem key={i} $width={width} $bg={bg} $bar={bar} $fullBar={full}>
              <Glyph />
            </TaskItem>
          ))}
        </StartArea>
        <Tray>
          <TrayIcon $width={30}>
            <svg width="16" height="9" viewBox="0 0 16 9" fill="none" stroke="#fff" strokeWidth="1.2">
              <path d="M1 8l7-7 7 7" />
            </svg>
          </TrayIcon>
          <TrayIcon $width={30}>
            <svg width="18" height="16" viewBox="0 0 18 16" fill="none" stroke="#d5d5d5" strokeWidth="1">
              <path d="M1 15C2 8 8 2 16 1M5 15c1-4 5-9 11-10M9 15c.5-2 3-5.500 7-6" />
              <circle cx="14" cy="14" r="1.5" fill="#fff" stroke="none" />
            </svg>
          </TrayIcon>
          <TrayIcon $width={32}>
            <svg width="16" height="18" viewBox="0 0 16 18" fill="none" stroke="#f0f0f0" strokeWidth="1">
              <rect x="1" y="4" width="9" height="10" rx="1.5" />
              <path d="M10 8l5-2v6l-5-2M2 1.500h7M2 16.500h7" />
            </svg>
          </TrayIcon>
          <TrayIcon $width={28}>
            <svg width="20" height="12" viewBox="0 0 20 12">
              <rect x="5" y="2" width="14" height="9" fill="#f0f0f0" />
              <path d="M1 1h3v3H1zM2.500 4v4H5" fill="none" stroke="#f0f0f0" />
            </svg>
          </TrayIcon>
          <TrayIcon $width={30}>
            <svg width="20" height="20" viewBox="0 0 20 20">
              <rect width="20" height="20" fill="#f0c8c8" />
              <path d="M4 3h3.500L10 12l2.500-9H16l-4.500 14h-3z" fill="#c62a2a" />
            </svg>
          </TrayIcon>
          <TrayIcon $width={28}>
            <svg width="18" height="14" viewBox="0 0 18 14" fill="none" stroke="#f0f0f0" strokeWidth="1">
              <path d="M1 4.500h2.500L7.500 1v12l-4-3.500H1zM11 4.500l5 5M16 4.500l-5 5" />
            </svg>
          </TrayIcon>
          <TrayLang>ENG</TrayLang>
          <Clock>
            11:07 PM
            <br />
            7/14/2022
          </Clock>
          <NotifyWrap>
            <NotifyGlyph width="20" height="18" viewBox="0 0 20 18">
              <path d="M0 0h20v14H6l-3 4v-4H0z" fill="#fff" />
              <path d="M3 4h14M3 7h14M3 10h9" stroke="#333" strokeWidth="1" />
            </NotifyGlyph>
            <NotifyCount>3</NotifyCount>
          </NotifyWrap>
        </Tray>
      </Taskbar>
    </Page>
  );
}
